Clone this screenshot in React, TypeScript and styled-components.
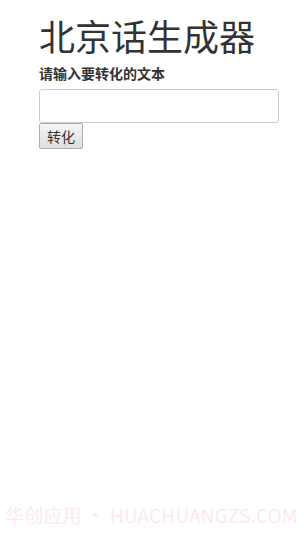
import React, { useState } from 'react';
import styled, { createGlobalStyle } from 'styled-components';

const GlobalStyle = createGlobalStyle`
	html, body {
		margin: 0;
		padding: 0;
		background: #fff;
	}
	body {
		font-family: "Liberation Sans", "Noto Sans CJK SC", sans-serif;
		color: #333;
	}
`;

const Page = styled.div`
	width: 304px;
	height: 536px;
	display: flex;
	flex-direction: column;
	justify-content: space-between;
	overflow: hidden;
`;

const Container = styled.div`
	padding: 14px 0 0 39px;
	width: 240px;
	display: flex;
	flex-direction: column;
	align-items: flex-start;
`;

const Title = styled.h1`
	margin: 0;
	font-size: 36px;
	font-weight: 400;
	line-height: 42px;
	color: #333;
	font-family: "Noto Sans CJK SC", sans-serif;
`;

const Label = styled.label`
	margin-top: 8px;
	font-size: 14px;
	font-weight: 700;
	line-height: 19px;
	color: #333;
	font-family: "Noto Sans CJK SC", sans-serif;
`;

const Input = styled.input`
	box-sizing: border-box;
	margin-top: 6px;
	width: 240px;
	height: 34px;
	border: 1px solid #ccc;
	border-radius: 3px;
	padding: 6px 10px;
	font-size: 14px;
	outline: none;
`;

const Button = styled.button`
	box-sizing: border-box;
	margin-top: 0;
	height: 26px;
	padding: 0 7px;
	border: 1px solid #adadad;
	border-radius: 2px;
	background: linear-gradient(#f6f6f6, #dedede);
	font-size: 14px;
	color: #333;
	font-family: "Noto Sans CJK SC", sans-serif;
	line-height: 22px;
`;

const Watermark = styled.div`
	padding: 0 0 9px 5px;
	font-size: 19px;
	line-height: 24px;
	color: #fde8f5;
	font-family: "Noto Sans CJK SC", sans-serif;
	white-space: nowrap;
	letter-spacing: 0.2px;
`;

export default function App() {
	const [text, setText] = useState('');
	return (
		<>
			<GlobalStyle />
			<Page>
				<Container>
					<Title>北京话生成器</Title>
					<Label htmlFor='src'>请输入要转化的文本</Label>
					<Input id='src' value={text} onChange={(e) => setText(e.target.value)} />
					<Button>转化</Button>
				</Container>
				<Watermark>华创应用 • HUACHUANGZS.COM</Watermark>
			</Page>
		</>
	);
}
